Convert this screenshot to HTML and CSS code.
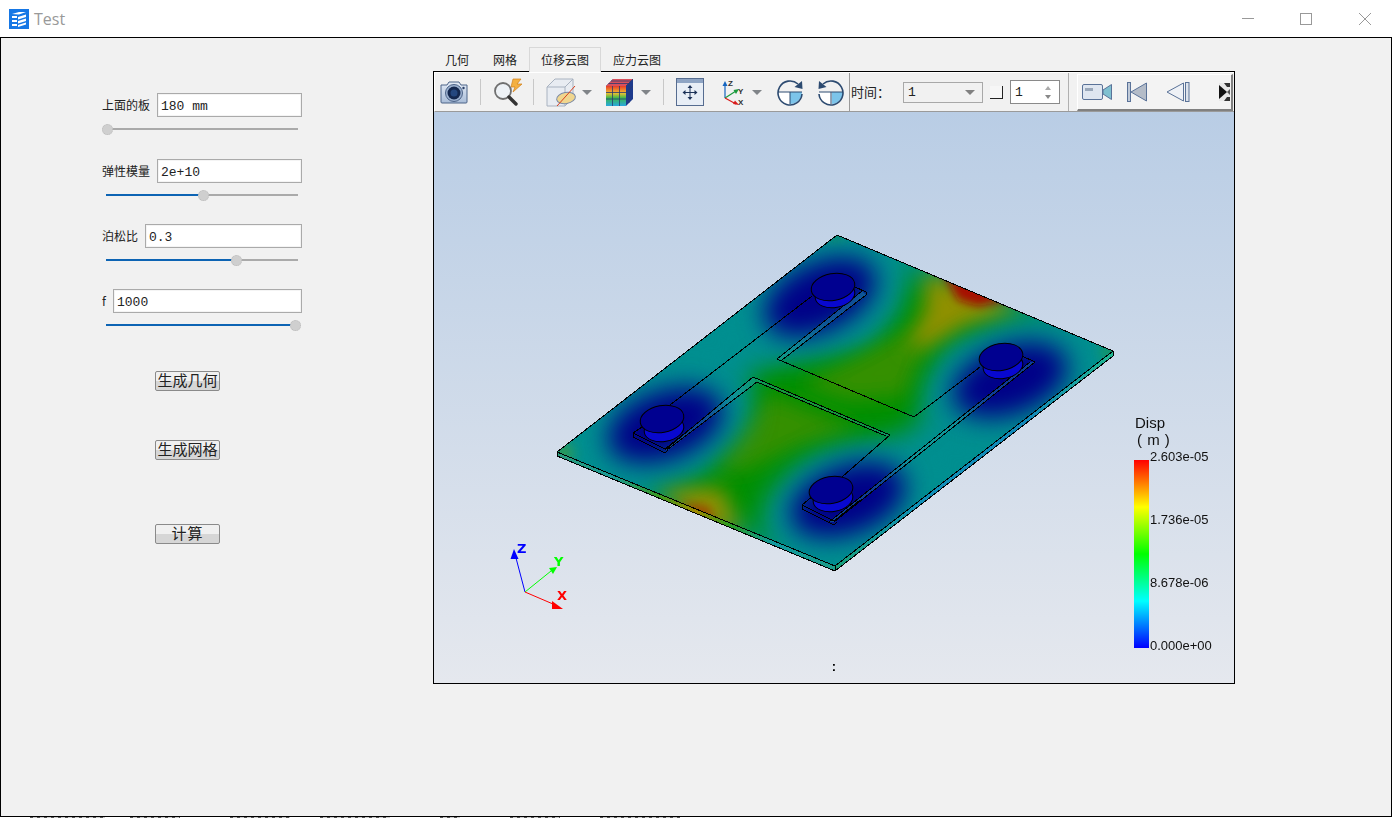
FILE: index.html
```html
<!DOCTYPE html>
<html lang="zh">
<head>
<meta charset="utf-8">
<title>Test</title>
<link rel="stylesheet" href="styles.css">
</head>
<body>
<div class="window">
  <header class="titlebar">
    <svg class="app-icon" width="20" height="20" viewBox="0 0 20 20">
      <rect width="20" height="20" fill="#1677e5"/>
      <path d="M3 5 L10 3 L17 3 L10 5.5 Z M3 7 H8 V9 H3 Z M3 11 H8 V13 H3 Z M3 15 H8 V17 H3 Z M9 8 L17 5.5 V8 L9 10.5 Z M9 12 L17 9.5 V12 L9 14.5 Z M9 16 L17 13.5 V15.5 L9 18 Z" fill="#fff"/>
    </svg>
    <span class="app-title">Test</span>
    <div class="win-controls">
      <svg class="win-min" width="12" height="12" viewBox="0 0 12 12"><path d="M0 5.5H12" stroke="#999" fill="none"/></svg>
      <svg class="win-max" width="12" height="12" viewBox="0 0 12 12"><rect x=".5" y=".5" width="11" height="11" stroke="#999" fill="none"/></svg>
      <svg class="win-close" width="12" height="12" viewBox="0 0 12 12"><path d="M0 0L12 12M12 0L0 12" stroke="#999" fill="none"/></svg>
    </div>
  </header>

  <div class="body">
    <aside class="panel">
      <div class="group">
        <div class="field"><label>上面的板</label><input value="180 mm" readonly></div>
        <div class="slider"><i class="fill" style="width:0%"></i><b class="knob" style="left:0.5%"></b></div>
      </div>
      <div class="group tight">
        <div class="field"><label>弹性模量</label><input value="2e+10" readonly></div>
        <div class="slider"><i class="fill" style="width:50%"></i><b class="knob" style="left:50.5%"></b></div>
      </div>
      <div class="group tight">
        <div class="field"><label>泊松比</label><input value="0.3" readonly></div>
        <div class="slider"><i class="fill" style="width:67%"></i><b class="knob" style="left:67.5%"></b></div>
      </div>
      <div class="group">
        <div class="field"><label class="short">f</label><input value="1000" readonly></div>
        <div class="slider"><i class="fill" style="width:100%"></i><b class="knob" style="left:98.5%"></b></div>
      </div>
      <button class="btn btn-geo">生成几何</button>
      <button class="btn btn-mesh">生成网格</button>
      <button class="btn btn-calc">计算</button>
    </aside>

    <section class="workspace">
      <nav class="tabs">
        <span class="tab">几何</span>
        <span class="tab">网格</span>
        <span class="tab active">位移云图</span>
        <span class="tab">应力云图</span>
      </nav>
      <div class="viewport">
        <div class="toolbar">
          <svg class="t-camera" width="28" height="24" viewBox="0 0 28 24">
            <defs><linearGradient id="camBody" x1="0" y1="0" x2="0" y2="1"><stop offset="0" stop-color="#e4ebf6"/><stop offset="1" stop-color="#a9bdd8"/></linearGradient></defs>
            <path d="M1 5 H7 L9 2 H19 L21 5 H27 V22 Q27 23 26 23 H2 Q1 23 1 22 Z" fill="url(#camBody)" stroke="#4d6488"/>
            <circle cx="14" cy="13" r="8.500" fill="#9db2d0" stroke="#4d6488"/>
            <circle cx="14" cy="13" r="6.500" fill="#14284f"/>
            <circle cx="14" cy="13" r="3.500" fill="#24477f"/>
            <circle cx="23.5" cy="8" r="1.200" fill="#2a3f66"/>
          </svg>
          <i class="sep t-sep1"></i>
          <svg class="t-mag" width="30" height="28" viewBox="0 0 30 28">
            <path d="M20 1 L28 1 L24 6 L29 6 L20 14 L22 9 L18 9 Z" fill="#f4b040" stroke="#d08018" stroke-width=".7"/>
            <circle cx="10" cy="13" r="8" fill="#eef2f6" stroke="#707070" stroke-width="1.800"/>
            <path d="M16 19 L23 26" stroke="#333" stroke-width="3.400" stroke-linecap="round"/>
          </svg>
          <i class="sep t-sep2"></i>
          <svg class="t-cube" width="32" height="29" viewBox="0 0 32 29">
            <path d="M1 9 L9 1 H27 V20 L19 28 H1 Z" fill="#e8ecf2" stroke="#a8b2c0"/>
            <path d="M1 9 H19 V28 M19 9 L27 1" fill="none" stroke="#a8b2c0"/>
            <ellipse cx="20" cy="20" rx="9.500" ry="5.500" fill="#f0d68e" stroke="#7a8aa8" transform="rotate(-10 20 20)"/>
            <path d="M11 28 L29 8" stroke="#d8401c" stroke-width="1"/>
          </svg>
          <svg class="t-arrow t-a1" width="10" height="5" viewBox="0 0 10 5"><path d="M0 0H10L5 5Z" fill="#808488"/></svg>
          <svg class="t-ccube" width="29" height="29" viewBox="0 0 29 29">
            <defs><linearGradient id="cubeFace" x1="0" y1="0" x2="0" y2="1"><stop offset="0" stop-color="#e83a28"/><stop offset=".35" stop-color="#f0c030"/><stop offset=".6" stop-color="#3ab84c"/><stop offset="1" stop-color="#28a8e0"/></linearGradient></defs>
            <path d="M1 8 L8 1 H28 V21 L21 28 H1 Z" fill="#1d3a8c"/>
            <path d="M1 8 H21 V28 H1 Z" fill="url(#cubeFace)"/>
            <path d="M1 8 L8 1 H28 L21 8 Z" fill="#d8505c"/>
            <path d="M7.500 8V28M14.500 8V28M1 14.500H21M1 21H21M21 8L28 1M3.500 5.500H23.500M6 3H26M24 5V25M21 14.500L28 8" stroke="#2a3a70" stroke-width=".8" fill="none"/>
          </svg>
          <svg class="t-arrow t-a2" width="10" height="5" viewBox="0 0 10 5"><path d="M0 0H10L5 5Z" fill="#808488"/></svg>
          <i class="sep t-sep3"></i>
          <svg class="t-fit" width="28" height="28" viewBox="0 0 28 28">
            <rect x=".5" y=".5" width="27" height="27" fill="#e8eef6" stroke="#566c90"/>
            <rect x="1" y="1" width="26" height="4" fill="#8ea4c4"/>
            <path d="M14 8V21M7.500 14.500H20.500" stroke="#1c3258" stroke-width="1"/>
            <path d="M14 7L11.500 10H16.500ZM14 22L11.500 19H16.500ZM6.500 14.500L9.500 12V17ZM21.500 14.500L18.500 12V17Z" fill="#1c3258"/>
          </svg>
          <svg class="t-axes" width="24" height="28" viewBox="0 0 24 28">
            <path d="M3 20V7" stroke="#1565c0" stroke-width="1.200"/><path d="M3 3L.5 8H5.500Z" fill="#1565c0"/>
            <path d="M3 20L14 13" stroke="#1a9a3c" stroke-width="1.200"/><path d="M17 11L11.500 12L14 16Z" fill="#1a9a3c"/>
            <path d="M3 20L14 26" stroke="#d81c1c" stroke-width="1.200"/><path d="M17 27L11 26L13 22.500Z" fill="#d81c1c"/>
            <text x="6" y="8" class="axis-mini">Z</text><text x="16" y="16" class="axis-mini">Y</text><text x="16" y="27" class="axis-mini">X</text>
          </svg>
          <svg class="t-arrow t-a3" width="10" height="5" viewBox="0 0 10 5"><path d="M0 0H10L5 5Z" fill="#808488"/></svg>
          <svg class="t-rot" width="27" height="27" viewBox="0 0 27 27">
            <path d="M13 13H1.500A12 12 0 0 0 13 25Z" fill="#fff"/>
            <path d="M13 13H25A12 12 0 0 1 13 25Z" fill="#7cc4ea"/>
            <path d="M1 13H25M13 13V25" stroke="#2c4a70" fill="none"/>
            <path d="M21 5A12 12 0 1 0 25 15" stroke="#2c4a70" stroke-width="1.600" fill="none"/>
            <path d="M25 2L25.500 10L17.500 8Z" fill="#2c4a70"/>
          </svg>
          <svg class="t-rotb" width="26" height="27" viewBox="0 0 26 27">
            <path d="M13 13H1A12 12 0 0 0 13 25Z" fill="#fff"/>
            <path d="M14 13H25A12 12 0 0 1 14 25Z" fill="#7cc4ea"/>
            <path d="M1 13H25M13 13V25" stroke="#2c4a70" fill="none"/>
            <path d="M5 5A12 12 0 1 1 1 15" stroke="#2c4a70" stroke-width="1.600" fill="none"/>
            <path d="M1 2L.5 10L8.500 8Z" fill="#2c4a70"/>
          </svg>
          <i class="sep t-sep4"></i>
          <span class="t-time">时间：</span>
          <div class="select"><span>1</span><svg width="10" height="5" viewBox="0 0 10 5"><path d="M0 0H10L5 5Z" fill="#808080"/></svg></div>
          <i class="check"></i>
          <div class="spin"><span>1</span>
            <svg width="8" height="15" viewBox="0 0 8 15"><path d="M4 1L7 5H1Z" fill="#aaa"/><path d="M4 14L7 10H1Z" fill="#888"/></svg>
          </div>
          <i class="sep t-sep5"></i>
          <div class="toolbar2">
            <svg class="u-cam" width="30" height="18" viewBox="0 0 30 18">
              <rect x=".5" y="1.500" width="20" height="15" rx="1.500" fill="#dfe6f0" stroke="#5a7298"/>
              <rect x="3" y="5" width="8" height="3" fill="#9aa8ba"/>
              <path d="M21 7L29.500 1.500V16.500L21 11Z" fill="#7fc0d0" stroke="#5a7298"/>
            </svg>
            <svg class="u-first" width="20" height="20" viewBox="0 0 20 20">
              <rect x=".5" y=".5" width="3" height="19" fill="#c0cad8" stroke="#5a7298"/>
              <path d="M19.500 1V19L4 10Z" fill="#b4bcc8" stroke="#5a7298"/>
            </svg>
            <svg class="u-prev" width="24" height="20" viewBox="0 0 24 20">
              <path d="M17.500 1V19L1 10Z" fill="#eef1f6" stroke="#5a7298"/>
              <rect x="19.500" y=".5" width="3.500" height="19" fill="#dde3ec" stroke="#5a7298"/>
            </svg>
            <svg class="u-clip" width="11" height="18" viewBox="0 0 11 18">
              <rect width="11" height="18" fill="#e8e8e8"/>
              <path d="M0 2L8 9L0 16Z" fill="#111"/>
              <path d="M5 0H11V4H8ZM5 18H11V14H8Z" fill="#333"/>
              <path d="M8 9L11 6V12Z" fill="#555"/>
            </svg>
          </div>
        </div>

        <svg class="scene" width="800" height="571" viewBox="434 112 800 571">
          <defs>
            <linearGradient id="sky" x1="0" y1="0" x2="0" y2="1"><stop offset="0" stop-color="#b9cde5"/><stop offset="1" stop-color="#e5e8ee"/></linearGradient>
            <linearGradient id="bar" x1="0" y1="0" x2="0" y2="1">
              <stop offset="0" stop-color="#ff0000"/><stop offset=".25" stop-color="#ffff00"/><stop offset=".5" stop-color="#00ff00"/><stop offset=".75" stop-color="#00ffff"/><stop offset="1" stop-color="#0000ff"/>
            </linearGradient>
            <linearGradient id="frontSide" gradientUnits="userSpaceOnUse" x1="557" y1="0" x2="835" y2="0">
              <stop offset="0" stop-color="#2a9c7a"/><stop offset=".2" stop-color="#1a9a96"/><stop offset=".37" stop-color="#3a9a20"/><stop offset=".5" stop-color="#a08a00"/><stop offset=".62" stop-color="#2a9a20"/><stop offset=".78" stop-color="#109aa0"/><stop offset="1" stop-color="#1c9c88"/>
            </linearGradient>
            <linearGradient id="rightSide" gradientUnits="userSpaceOnUse" x1="835" y1="0" x2="1113" y2="0">
              <stop offset="0" stop-color="#18a078"/><stop offset=".3" stop-color="#1090b8"/><stop offset=".7" stop-color="#1288b8"/><stop offset="1" stop-color="#20b890"/>
            </linearGradient>
            <clipPath id="topFace"><polygon points="557,452 837,235 1113,351 835,566"/></clipPath>
            <filter id="b14" filterUnits="userSpaceOnUse" x="434" y="112" width="800" height="571"><feGaussianBlur stdDeviation="14"/></filter>
            <filter id="b10" filterUnits="userSpaceOnUse" x="434" y="112" width="800" height="571"><feGaussianBlur stdDeviation="10"/></filter>
            <filter id="b13" filterUnits="userSpaceOnUse" x="434" y="112" width="800" height="571"><feGaussianBlur stdDeviation="13"/></filter>
            <filter id="b7" filterUnits="userSpaceOnUse" x="434" y="112" width="800" height="571"><feGaussianBlur stdDeviation="7"/></filter>
            <filter id="b5" filterUnits="userSpaceOnUse" x="434" y="112" width="800" height="571"><feGaussianBlur stdDeviation="5"/></filter>
          </defs>
          <rect x="434" y="112" width="800" height="571" fill="url(#sky)"/>

          <polygon points="557,452 835,566 835,571 557,456" fill="url(#frontSide)"/>
          <polygon points="835,566 1113,351 1113,356 835,571" fill="url(#rightSide)"/>

          <g clip-path="url(#topFace)">
            <rect x="550" y="230" width="570" height="345" fill="#008f90"/>
            <polygon filter="url(#b14)" fill="#009000" points="880,262 1075,335 1010,330 950,350 930,410 885,450 810,470 780,545 640,485 700,470 730,420 755,370 800,350 870,345 900,300"/>
            <polygon filter="url(#b10)" fill="#349000" points="770,395 860,430 800,445 745,470 715,470 735,430"/>
            <polygon filter="url(#b10)" fill="#349000" points="800,385 900,335 925,345 905,395 850,400"/>
            <polygon filter="url(#b10)" fill="#909000" points="925,272 1022,312 965,326 925,350 905,345 925,310"/>
            <polygon filter="url(#b10)" fill="#909000" points="655,486 722,488 742,535 700,522"/>
            <polygon filter="url(#b5)" fill="#a81000" points="942,270 1008,300 978,306 958,300"/>
            <polygon filter="url(#b5)" fill="#a04800" points="680,503 708,506 716,522 695,516"/>
            <circle filter="url(#b7)" cx="837" cy="238" r="10" fill="#209a50"/>
            <circle filter="url(#b7)" cx="1108" cy="352" r="9" fill="#209a50"/>
            <circle filter="url(#b7)" cx="565" cy="453" r="10" fill="#40a040"/>
            <g filter="url(#b13)" fill="#008f90">
              <ellipse cx="820" cy="297" rx="92" ry="54" transform="rotate(-25 820 297)"/>
              <ellipse cx="1010" cy="380" rx="90" ry="54" transform="rotate(-20 1010 380)"/>
              <ellipse cx="665" cy="425" rx="90" ry="54" transform="rotate(-20 665 425)"/>
              <ellipse cx="848" cy="500" rx="90" ry="54" transform="rotate(-20 848 500)"/>
            </g>
            <g filter="url(#b13)" fill="#000088">
              <ellipse cx="820" cy="297" rx="60" ry="34" transform="rotate(-25 820 297)"/>
              <ellipse cx="1010" cy="380" rx="60" ry="34" transform="rotate(-20 1010 380)"/>
              <ellipse cx="665" cy="425" rx="60" ry="34" transform="rotate(-20 665 425)"/>
              <ellipse cx="848" cy="500" rx="60" ry="34" transform="rotate(-20 848 500)"/>
            </g>
          </g>

          <g class="edges">
            <polygon class="wall" points="777,359 862,291 866,295 782,360"/>
            <polygon class="wall" points="753,377 665,450 668,450 757,382"/>
            <polygon class="wall" points="753,377 890,435 886,436 758,382"/>
            <polygon class="wall" points="834,522 1035,362 1030,362 829,522"/>

            <polygon class="outline" points="557,452 837,235 1113,351 835,566"/>
            <polyline class="line" points="557,452 557,456 835,571 1113,356 1113,351"/>
            <line class="line" x1="835" y1="566" x2="835" y2="571"/>

            <line class="line" x1="812" y1="296" x2="670" y2="405"/>
            <polyline class="line" points="862,291 777,359 914,417 980,367"/>
            <polyline class="line" points="866,295 782,360"/>
            <polyline class="line" points="855,287 866,292 866,295"/>
            <polyline class="line" points="665,450 753,377 890,435 842,477"/>
            <polyline class="line" points="667,450 757,382 886,436"/>
            <polyline class="line" points="834,522 1035,362 1022,356"/>
            <polyline class="line" points="829,522 1030,362"/>

            <polyline class="line" points="645,425 633,433 665,449 690,429"/>
            <polyline class="line" points="633,433 633,437 665,453 668,450"/>
            <polyline class="line" points="814,495 802,505 834,521 860,500"/>
            <polyline class="line" points="802,505 802,509 834,525 837,522"/>
          </g>

          <g class="cyl">
            <ellipse class="cyl-side" cx="835" cy="295" rx="20" ry="12.500" transform="rotate(-10 835 295)"/>
            <ellipse class="cyl-top" cx="833" cy="287" rx="22" ry="13.500" transform="rotate(-10 833 287)"/>
            <ellipse class="cyl-side" cx="1003" cy="366" rx="20" ry="12.500" transform="rotate(-10 1003 366)"/>
            <ellipse class="cyl-top" cx="1001" cy="357" rx="22" ry="13.500" transform="rotate(-10 1001 357)"/>
            <ellipse class="cyl-side" cx="664" cy="429" rx="20" ry="12.500" transform="rotate(-10 664 429)"/>
            <ellipse class="cyl-top" cx="662" cy="419" rx="22" ry="13.500" transform="rotate(-10 662 419)"/>
            <ellipse class="cyl-side" cx="833" cy="499" rx="20" ry="12.500" transform="rotate(-10 833 499)"/>
            <ellipse class="cyl-top" cx="831" cy="490" rx="22" ry="13.500" transform="rotate(-10 831 490)"/>
          </g>

          <text x="1135" y="428" class="leg-title">Disp</text>
          <text x="1137" y="445" class="leg-title leg-unit">( m )</text>
          <rect x="1134" y="460" width="15" height="188" fill="url(#bar)"/>
          <text x="1150" y="461" class="leg-num">2.603e-05</text>
          <text x="1150" y="524" class="leg-num">1.736e-05</text>
          <text x="1150" y="587" class="leg-num">8.678e-06</text>
          <text x="1150" y="650" class="leg-num">0.000e+00</text>

          <path d="M525 592 L516 558" stroke="#0000ff" fill="none"/>
          <path d="M514 549 L510.500 559 L518.500 559 Z" fill="#0000ff"/>
          <path d="M525 592 L551 571" stroke="#00ff00" fill="none"/>
          <path d="M557 567 L549 568 L553 574 Z" fill="#00ff00"/>
          <path d="M525 592 L553 604" stroke="#ff0000" fill="none"/>
          <path d="M563 609 L552 601 L552 609 Z" fill="#ff0000"/>
          <text x="517" y="553" class="ax ax-z">Z</text>
          <text x="554" y="566" class="ax ax-y">Y</text>
          <text x="557" y="600" class="ax ax-x">X</text>
          <text x="834" y="671" class="colon">:</text>
        </svg>
      </div>
    </section>
  </div>
  <div class="strip">
    <i class="frag f1"></i><i class="frag f2"></i><i class="frag f3"></i><i class="frag f4"></i><i class="frag f5"></i><i class="frag f6"></i><i class="frag f7"></i>
  </div>
</div>
</body>
</html>
```
FILE: styles.css
```css
* { box-sizing: border-box; }
html, body { margin: 0; padding: 0; }
body { width: 1392px; height: 818px; overflow: hidden; background: #fff; font-family: "Noto Sans CJK SC", sans-serif; color: #222; }
.window { display: flex; flex-direction: column; width: 1392px; height: 818px; }

.titlebar { display: flex; align-items: center; height: 37px; padding-left: 9px; background: #fff; flex: none; }
.app-icon { flex: none; }
.app-title { margin-left: 5px; font: 16px "Open Sans", sans-serif; color: #999; }
.win-controls { display: flex; margin-left: auto; padding-right: 21px; }
.win-max { margin-left: 46px; }
.win-close { margin-left: 47px; }

.body { display: flex; height: 780px; flex: none; border: 1px solid #000; background: #f1f1f1; }
.strip { display: flex; height: 1px; flex: none; background: #fff; padding-left: 30px; }
.frag { display: block; height: 1px; background: repeating-linear-gradient(90deg, #555 0 3px, #ccc 3px 7px); }
.f1 { width: 75px; }
.f2 { width: 50px; margin-left: 25px; }
.f3 { width: 60px; margin-left: 50px; }
.f4 { width: 70px; margin-left: 30px; }
.f5 { width: 20px; margin-left: 50px; }
.f6 { width: 50px; margin-left: 50px; }
.f7 { width: 80px; margin-left: 40px; }

.panel { width: 432px; flex: none; padding: 55px 0 0 101px; display: flex; flex-direction: column; align-items: flex-start; }
.group { width: 200px; margin-bottom: 29px; }
.group.tight { margin-bottom: 28px; }
.field { display: flex; align-items: center; gap: 7px; height: 24px; }
.field label { font-size: 12px; line-height: 24px; color: #222; white-space: nowrap; }
.field label.short { width: 4px; }
.field input { flex: 1; min-width: 0; height: 24px; border: 1px solid #aaa; background: #fff; padding: 2px 3px 0; font: 13px/20px "Liberation Mono", monospace; color: #222; outline: 0; box-shadow: inset 0 0 0 1px #f4f4f4; }
.slider { position: relative; width: 192px; height: 2px; margin: 11px 0 0 4px; background: #aaa; }
.slider .fill { position: absolute; left: 0; top: 0; height: 2px; background: #0d64b4; display: block; }
.slider .knob { position: absolute; top: -4.5px; width: 11px; height: 11px; margin-left: -5px; border-radius: 50%; background: #cfcfcf; border: 1px dotted #bbb; display: block; }

.btn { display: block; width: 65px; height: 20px; margin-left: 53px; padding: 0 0 2px; border: 1px solid #8a8a8a; border-radius: 2px; background: linear-gradient(#f0f0f0 0 50%, #d6d6d6 50% 100%); font: 15px/16px "Noto Sans CJK SC", sans-serif; color: #222; white-space: nowrap; }
.btn-geo { margin-top: 16px; }
.btn-mesh { margin-top: 49px; }
.btn-calc { margin-top: 64px; letter-spacing: 1px; }

.workspace { flex: none; padding-top: 9px; width: 802px; }
.tabs { display: flex; height: 24px; }
.tab { padding: 0 12px; font-size: 12px; line-height: 26px; color: #222; white-space: nowrap; }
.tab.active { border: 1px solid #d8d8d8; border-bottom: 0; padding: 0 11px; line-height: 24px; height: 25px; background: #f1f1f1; position: relative; z-index: 1; }

.viewport { width: 802px; height: 613px; border: 1px solid #000; background: #f1f1f1; display: flex; flex-direction: column; overflow: hidden; }
.toolbar { display: flex; align-items: center; height: 40px; flex: none; background: #f1f1f1; border-top: 1px solid #fff; border-bottom: 1px solid #9a9a9a; border-left: 1px solid #fff; padding-left: 5px; font-size: 13px; }
.toolbar > * { flex: none; }
.sep { display: block; width: 1px; height: 26px; background: #c8c8c8; }
.t-sep1 { margin-left: 12px; }
.t-mag { margin-left: 12px; }
.t-sep2 { margin-left: 10px; }
.t-cube { margin-left: 12px; }
.t-a1 { margin-left: 4px; }
.t-ccube { margin-left: 13px; }
.t-a2 { margin-left: 7px; }
.t-sep3 { margin-left: 12px; }
.t-fit { margin-left: 12px; }
.t-axes { margin-left: 18px; }
.t-a3 { margin-left: 6px; }
.t-rot { margin-left: 15px; }
.t-rotb { margin-left: 14px; }
.t-sep4 { margin-left: 5px; height: 38px; background: #9a9a9a; }
.t-time { margin-left: 1px; width: 38px; padding-bottom: 2px; font-size: 13px; white-space: nowrap; overflow: hidden; }
.axis-mini { font: bold 8px "Liberation Sans", sans-serif; fill: #333; }
.select { display: flex; align-items: center; justify-content: space-between; width: 80px; height: 21px; margin-left: 14px; padding: 0 7px 0 4px; border: 1px solid #a8a8a8; background: #f1f1f1; font: 13px "Liberation Mono", monospace; }
.check { display: block; width: 13px; height: 13px; margin-left: 7px; border-right: 1px solid #222; border-bottom: 1px solid #222; background: #f6f6f6; }
.spin { display: flex; align-items: center; justify-content: space-between; width: 50px; height: 24px; margin-left: 7px; padding: 0 7px 0 4px; border: 1px solid #8a8a8a; background: #fff; font: 13px "Liberation Mono", monospace; }
.t-sep5 { margin-left: 8px; height: 38px; background: #b0b0b0; }
.toolbar2 { display: flex; align-items: center; width: 156px; height: 37px; margin-left: 8px; padding-left: 4px; background: #f3f3f3; border-top: 1px solid #fff; border-left: 1px solid #fff; border-right: 2px solid #808080; border-bottom: 2px solid #808080; overflow: hidden; }
.toolbar2 > * { flex: none; }
.u-first { margin-left: 15px; }
.u-prev { margin-left: 19px; }
.u-clip { margin-left: 29px; }

.scene { display: block; flex: none; }
.outline, .line { fill: none; stroke: #000; stroke-width: 1; shape-rendering: crispEdges; }
.wall { fill: #28a8b0; fill-opacity: .35; stroke: none; }
.cyl-side { fill: #0808d0; stroke: #000; stroke-width: 1; }
.cyl-top { fill: #000090; stroke: #000; stroke-width: 1; }
.leg-title { font: 15px "Liberation Sans", sans-serif; fill: #111; }
.leg-unit { word-spacing: 1px; }
.leg-num { font: 13px "Liberation Sans", sans-serif; fill: #111; }
.ax { font: bold 13px "DejaVu Sans", sans-serif; }
.ax-z { fill: #0000ff; }
.ax-y { fill: #00ff00; }
.ax-x { fill: #ff0000; }
.colon { font: bold 13px "Liberation Sans", sans-serif; fill: #000; text-anchor: middle; }
```
